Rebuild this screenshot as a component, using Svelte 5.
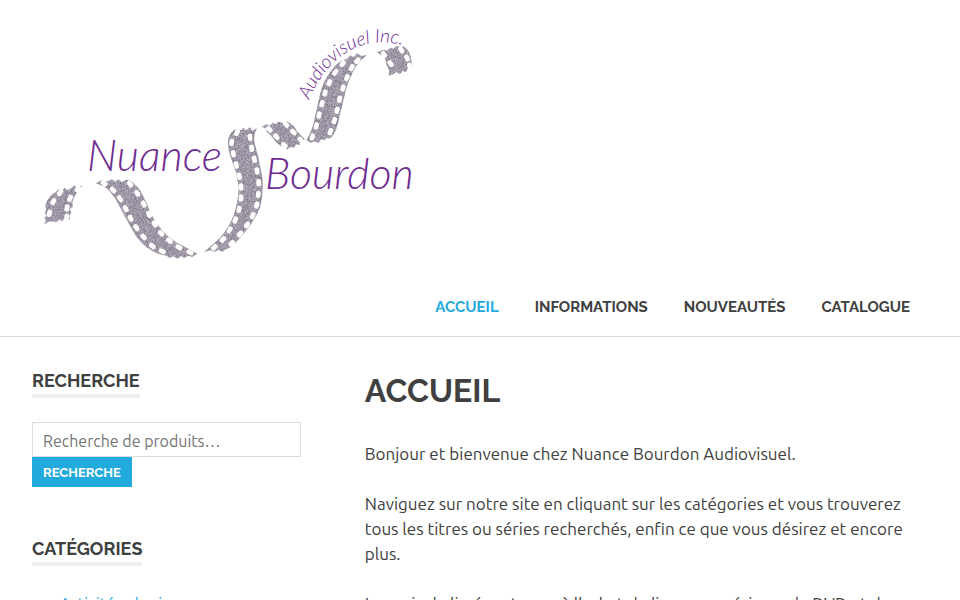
<script>
  const nav = ['Accueil', 'Informations', 'Nouveautés', 'Catalogue'];

  // Film strips: outline and perforation rows, in thirds of a logo unit.
  const strips = [
    {
      origin: [30, 120],
      outline: 'M42 313L48 300L43 294L49 287L44 276L49 270L46 255Q54 228 78 215L88 208L98 212L103 203L112 210L126 203L133 196L139 203L158 197Q136 217 127 247L128 262L119 267L124 279L117 287L121 298L111 300L105 292L98 303L87 299L78 307L65 304L55 306Z',
      rows: [[[90, 218], [70, 245], [58, 280]], [[143, 207], [120, 235], [111, 264], [110, 292]]]
    },
    {
      origin: [30, 120],
      outline: 'M197 190L215 181L229 185L246 178L256 185L264 178L276 187L287 179L299 181Q325 198 337 223Q351 247 361 278Q375 307 398 333Q419 357 450 373L478 388L502 401L487 411L474 407L463 415L454 408L442 416L431 409L419 415L410 407Q380 405 350 382Q323 360 307 330L282 285L258 239Q238 210 222 199Z',
      rows: [
        [[300, 192], [322, 220], [341, 252], [357, 283], [374, 312], [393, 340], [418, 362], [447, 382], [480, 397]],
        [[222, 190], [249, 210], [270, 236], [287, 266], [302, 295], [319, 323], [341, 351], [367, 378], [397, 394]]
      ]
    },
    {
      origin: [180, 110],
      outline: 'M145 85Q151 63 170 57L183 61L190 53L198 61L210 52L217 62L231 54Q220 73 223 95L235 142L247 200Q252 244 241 290Q223 334 198 362Q178 389 150 413L137 418L127 426L116 420L104 425L91 421L72 426L95 406L120 384Q148 350 160 318Q175 274 176 234L169 190L153 145Q141 115 145 85Z',
      rows: [
        [[171, 68], [155, 97], [160, 131], [169, 165], [178, 199], [183, 231], [183, 264], [177, 298], [166, 330], [149, 360], [129, 388], [103, 412]],
        [[210, 82], [215, 115], [223, 148], [231, 183], [236, 218], [235, 253], [230, 285], [218, 317], [201, 345], [180, 372], [155, 400]]
      ]
    },
    {
      origin: [180, 110],
      outline: 'M244 51L259 43L270 47L278 38L288 43L295 35L309 39L321 34Q343 45 351 64L376 90L362 91L359 105L349 103L342 113L331 111L322 118Q301 111 286 94L269 73L259 65L260 56Z',
      rows: [[[268, 58], [289, 80], [313, 106]], [[318, 43], [340, 66], [362, 90]]]
    },
    {
      origin: [260, 15],
      outline: 'M139 376Q158 344 164 309L179 242Q188 199 214 166Q234 137 261 131L271 121L281 126L291 115L303 122L321 121Q294 140 280 169Q262 203 253 245L239 303Q232 350 210 371L201 368L194 376L184 372L176 384L164 379L153 383Z',
      rows: [
        [[248, 146], [226, 172], [208, 203], [195, 234], [186, 266], [177, 300], [169, 333], [157, 366]],
        [[292, 137], [275, 158], [261, 188], [249, 219], [239, 253], [231, 286], [223, 317], [211, 350]]
      ]
    },
    {
      origin: [260, 15],
      outline: 'M350 111L371 105L381 107L391 98L401 101L408 93L421 96L431 94Q449 107 453 127L456 155L444 158L438 171L428 168L419 178L409 171L400 178L386 182L388 166L380 151Q378 126 364 121Z',
      rows: [[[372, 118], [392, 146]], [[424, 105], [441, 129], [449, 154]]]
    }
  ];

  function angle(row, i) {
    const a = row[Math.max(0, i - 1)];
    const b = row[Math.min(row.length - 1, i + 1)];
    return (Math.atan2(b[1] - a[1], b[0] - a[0]) * 180) / Math.PI;
  }
</script>

<div class="page">
  <header>
    <a class="brand" href="#accueil" aria-label="Nuance Bourdon Audiovisuel Inc.">
      <svg class="logo" viewBox="32 16 400 256">
        <defs>
          <filter id="grain" x="-5%" y="-5%" width="110%" height="110%" color-interpolation-filters="sRGB">
            <feTurbulence type="fractalNoise" baseFrequency="0.5" numOctaves="2" seed="4" result="noise" />
            <feColorMatrix in="noise" type="matrix" values="0.5 0.1 0 0 0.32  0.5 0 0.1 0 0.29  0.5 0 0 0 0.4  0 0 0 0 1" result="tone" />
            <feComposite in="tone" in2="SourceGraphic" operator="in" />
          </filter>
          <path id="arc" d="M309 100Q332 48 374 43Q394 40 424 52" />
        </defs>
        {#each strips as strip}
          <g transform="translate({strip.origin[0]} {strip.origin[1]}) scale(0.33333)">
            <path d={strip.outline} fill="#a39dab" filter="url(#grain)" />
            {#each strip.rows as row}
              {#each row as [x, y], i}
                <rect x="-11" y="-7" width="22" height="14" rx="6" fill="#fff" transform="translate({x} {y}) rotate({angle(row, i)})" />
              {/each}
            {/each}
          </g>
        {/each}
        <text class="script" x="87" y="171" font-size="43">Nuance</text>
        <text class="script" x="265" y="189" font-size="43">Bourdon</text>
        <text class="script" font-size="19"><textPath href="#arc">Audiovisuel Inc.</textPath></text>
      </svg>
    </a>
    <nav aria-label="Menu principal">
      {#each nav as item, i}
        <a href="#{item.toLowerCase()}" class:current={i === 0}>{item}</a>
      {/each}
    </nav>
  </header>

  <div class="content">
    <aside>
      <section>
        <h3><label for="search">Recherche</label></h3>
        <form onsubmit={(e) => e.preventDefault()}>
          <input id="search" type="search" placeholder="Recherche de produits…" />
          <button type="submit">Recherche</button>
        </form>
      </section>
      <section>
        <h3>Catégories</h3>
        <ul>
          <li><a href="#activites">Activités physiques</a></li>
        </ul>
      </section>
    </aside>
    <main>
      <h1>Accueil</h1>
      <p>Bonjour et bienvenue chez Nuance Bourdon Audiovisuel.</p>
      <p>Naviguez sur notre site en cliquant sur les catégories et vous trouverez tous les titres ou séries recherchés, enfin ce que vous désirez et encore plus.</p>
      <p>Le mois de livrés est pour à l’achat de ligne une série ou de DVD et de</p>
    </main>
  </div>
</div>

<style>
  :global(body) {
    background: #fff;
    overflow: hidden;
  }
  .page {
    height: 100vh;
    overflow: hidden;
    color: #404040;
    font: 17px/25px Ubuntu, "Noto Sans", sans-serif;
  }
  a {
    color: #22aadd;
    text-decoration: none;
  }
  header {
    padding: 16px 32px 0;
    border-bottom: 1px solid #ddd;
  }
  .brand {
    display: block;
  }
  .logo {
    display: block;
    width: 400px;
    max-width: 100%;
  }
  .script {
    font-family: Lato, sans-serif;
    font-style: italic;
    font-weight: 300;
    fill: #6f2c91;
  }
  nav {
    display: flex;
    justify-content: flex-end;
    padding: 6px 0 0;
  }
  nav a {
    padding: 16px 18px;
    color: #404040;
    font: 700 15px/26px Raleway, Lato, sans-serif;
    text-transform: uppercase;
  }
  nav a.current {
    color: #22aadd;
  }
  .content {
    display: grid;
    grid-template-columns: 30% 1fr;
    column-gap: 64px;
    padding: 32px 32px 0;
  }
  h1,
  h3 {
    font-family: Raleway, Lato, sans-serif;
    font-weight: 700;
    text-transform: uppercase;
  }
  h1 {
    margin: 0 0 28px;
    font-size: 32px;
    line-height: 44px;
  }
  h3 {
    display: table;
    margin: 0 0 24px;
    padding-bottom: 2px;
    border-bottom: 4px solid #eee;
    font-size: 18px;
    line-height: 23px;
  }
  h3 label {
    display: block;
  }
  section {
    margin-bottom: 50px;
  }
  input {
    display: block;
    box-sizing: border-box;
    width: 100%;
    height: 35px;
    padding: 3px 10px 0;
    border: 1px solid #ddd;
    border-radius: 0;
    outline: none;
    appearance: none;
    color: #404040;
    font: 16px Ubuntu, "Noto Sans", sans-serif;
  }
  input::placeholder {
    color: #757575;
  }
  button {
    display: block;
    height: 30px;
    padding: 1px 11px 0;
    border: 0;
    background: #22aadd;
    color: #fff;
    font: 700 13px/29px Raleway, Lato, sans-serif;
    text-transform: uppercase;
  }
  ul {
    margin: 0;
    padding: 0 0 0 28px;
    list-style: none;
  }
  li {
    font-size: 16px;
    line-height: 28px;
  }
  p {
    margin: 0 0 25px;
  }
</style>
